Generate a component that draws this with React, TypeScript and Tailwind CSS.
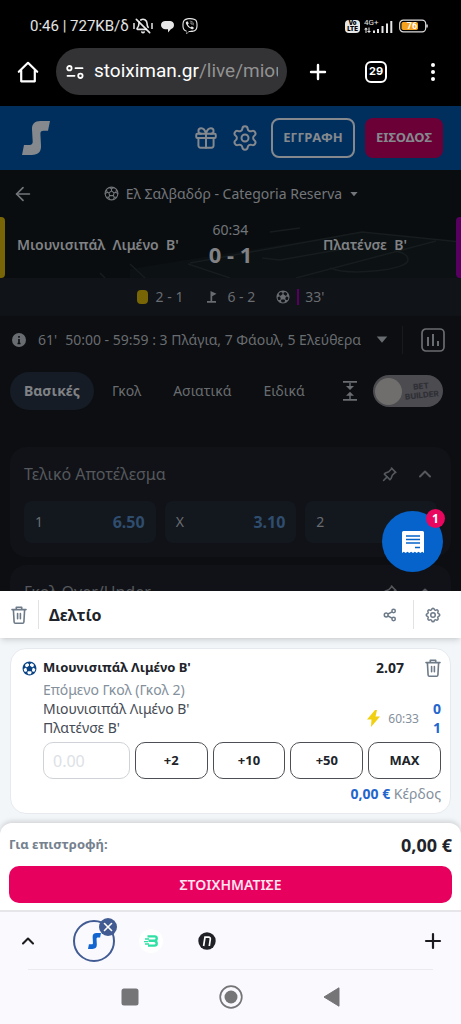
import React, { useState } from "react";
import { ArrowLeft, BellOff, ChevronUp, Gift, Plus, Settings, X } from "lucide-react";
import { FaViber } from "react-icons/fa";
import { TbPin, TbSettings } from "react-icons/tb";
import { IoFootball, IoFootballOutline } from "react-icons/io5";

const tabs = ["Βασικές", "Γκολ", "Ασιατικά", "Ειδικά"];
const odds = [
  { label: "1", price: "6.50" },
  { label: "X", price: "3.10" },
  { label: "2", price: "" },
];
const stakes = ["+2", "+10", "+50", "MAX"];

const Caret = ({ className }: { className?: string }) => (
  <svg viewBox="0 0 10 6" className={className} fill="currentColor">
    <path d="M0.5 0.5h9L5 5.8z" />
  </svg>
);

const LogoS = ({ className }: { className?: string }) => (
  <svg viewBox="0 0 28 34" className={className} fill="currentColor">
    <path d="M28 0H18.500C12.500 0 9.800 3 10 8.500L10.700 20.500C10.800 22.800 9.800 24 7.500 24H2L0 34H9.500C16.500 34 19.300 30.500 19 24.500L18.400 13C18.300 10.800 19.300 9.700 21.500 9.700H26Z" />
  </svg>
);

const Trash = ({ className }: { className?: string }) => (
  <svg viewBox="0 0 16 18" className={className} fill="none" stroke="currentColor" strokeWidth="1.600" strokeLinejoin="round" strokeLinecap="round">
    <path d="M1 3.600h14M5.300 3.400V1.200h5.400v2.200M2.400 3.800l.7 12.200c.1.800.5 1.200 1.200 1.200h7.400c.7 0 1.100-.4 1.200-1.200l.7-12.200M6.600 7.600v5.200M9.400 7.600v5.200" />
  </svg>
);

const Share = () => (
  <svg viewBox="0 0 14 14" className="h-3.5 w-3.5" fill="none" stroke="currentColor" strokeWidth="1.500">
    <circle cx="3.200" cy="7" r="1.900" />
    <circle cx="10.600" cy="3" r="1.700" />
    <circle cx="10.600" cy="11" r="1.700" />
    <path d="M5 6l4-2.200M5 8l4 2.200" />
  </svg>
);

const StatusBar = () => (
  <div className="flex h-12 items-center justify-between pr-8 pl-[30px] pt-1 text-white/90">
    <div className="flex items-center font-['Roboto',sans-serif] text-[15px]">
      <span>0:46 | 727KB/δ</span>
      <span className="ml-1 flex items-center">
        <svg viewBox="0 0 2 8" className="h-2 w-0.5" stroke="currentColor" strokeWidth="1.500">
          <path d="M1 1v6" />
        </svg>
        <BellOff className="h-4 w-4" strokeWidth={2.4} />
        <svg viewBox="0 0 2 8" className="h-2 w-0.5" stroke="currentColor" strokeWidth="1.500">
          <path d="M1 1v6" />
        </svg>
      </span>
      <svg viewBox="0 0 13 13" className="ml-2 h-[13px] w-[13px]" fill="currentColor">
        <path d="M4.500 1h4.200A4 4 0 0 1 13 5c0 2-1.200 3.700-3.200 4.200L7 12.500V9.300H4.500C2 9.300 0 7.500 0 5s2-4 4.500-4z" />
      </svg>
      <FaViber className="ml-2 h-4 w-4" />
    </div>
    <div className="flex items-center">
      <span className="flex h-[13px] w-[15px] flex-col items-center justify-center rounded-sm bg-white/90 font-['Inter',sans-serif] text-[6px] leading-[6px] font-black text-black">
        <span>Vo</span>
        <span>LTE</span>
      </span>
      <span className="ml-1 block font-['Roboto',sans-serif]">
        <svg viewBox="0 0 29 16" className="h-4 w-[29px]" fill="currentColor">
          <text x="0" y="6.500" fontSize="8">
            4G+
          </text>
          <path d="M2 9.500l2 2h-1.500V15h-1v-3.500H0zM5 15l-2-2h1.500V9.500h1V13H7zM9 12.500h2V15H9zM13 11h2v4h-2zM17.500 8h2v7h-2zM22 5.500h2V15h-2zM26.300 3h2v12h-2z" />
        </svg>
      </span>
      <svg viewBox="0 0 30 14" className="ml-1.5 h-3.5 w-[30px]">
        <rect x="0.700" y="1.200" width="26" height="11.600" rx="3.600" fill="none" stroke="#ddd" strokeWidth="1.200" />
        <rect x="2.500" y="3" width="16.500" height="8" rx="1.800" fill="#f5a11b" />
        <path d="M28 5.500v3" stroke="#ddd" strokeWidth="1.500" />
        <text x="13" y="10.200" fontSize="9" fontWeight="700" fill="#fff" textAnchor="middle" fontFamily="Roboto">
          76
        </text>
      </svg>
    </div>
  </div>
);

const BrowserBar = () => (
  <div className="flex h-[58px] items-start justify-between pr-5 pl-4">
    <div className="flex items-center">
      <button aria-label="Home" className="flex h-[47px] w-6 items-center justify-center">
        <svg viewBox="0 0 22 22" className="h-[22px] w-[22px]" fill="none" stroke="currentColor" strokeWidth="2.200" strokeLinejoin="round" strokeLinecap="round">
          <path d="M1.800 10.800L11 1.800l9.200 9M4.200 9.500v10.800h13.600V9.500" />
        </svg>
      </button>
      <div className="ml-4 flex h-[47px] w-[231px] items-center rounded-full bg-[#333335] pr-[9px] pl-2.5">
        <svg viewBox="0 0 18 14" className="h-3.5 w-[18px] shrink-0" fill="none" stroke="currentColor" strokeWidth="1.800" strokeLinecap="round">
          <circle cx="3.400" cy="3.200" r="2.200" />
          <path d="M9.500 3.200h7M1.500 10.800h7" />
          <circle cx="14.400" cy="10.800" r="2.200" />
        </svg>
        <div className="ml-2.5 overflow-hidden font-['Roboto',sans-serif] text-[19px] whitespace-nowrap">
          stoiximan.gr<span className="text-[#929292]">/live/miou</span>
        </div>
      </div>
    </div>
    <div className="flex h-[47px] items-center">
      <button aria-label="New tab">
        <Plus className="h-6 w-6" strokeWidth={2.4} />
      </button>
      <button className="ml-[35px] flex h-[22px] w-[22px] items-center justify-center rounded-md border-2 border-white font-['Inter',sans-serif] text-[11px] font-bold">29</button>
      <button aria-label="Menu" className="ml-[38px] flex w-4 flex-col items-center gap-[3px]">
        <i className="h-1 w-1 rounded-full bg-white" />
        <i className="h-1 w-1 rounded-full bg-white" />
        <i className="h-1 w-1 rounded-full bg-white" />
      </button>
    </div>
  </div>
);

const SiteHeader = () => (
  <header className="flex h-16 shrink-0 items-center bg-[#002f5e] pr-[18px] pl-[22px] text-[#85898e]">
    <a href="#" aria-label="Stoiximan" className="mr-auto">
      <LogoS className="h-[34px] w-7" />
    </a>
    <button aria-label="Δώρα">
      <Gift className="h-[26px] w-[26px]" strokeWidth={1.8} />
    </button>
    <button aria-label="Ρυθμίσεις" className="ml-3">
      <Settings className="h-7 w-7" strokeWidth={1.7} />
    </button>
    <button className="ml-3 h-10 w-[84px] rounded-lg border-2 border-[#85898e] text-[13px] font-bold">ΕΓΓΡΑΦΗ</button>
    <button className="ml-2.5 h-10 w-[78px] rounded-lg bg-[#6b0037] text-[13px] font-bold">ΕΙΣΟΔΟΣ</button>
  </header>
);

// faint pitch lines behind the scoreboard
const Pitch = () => (
  <svg viewBox="0 0 461 108" preserveAspectRatio="none" className="absolute inset-0 h-full w-full" fill="none" stroke="#171c1e" strokeWidth="1.500">
    <path d="M130 99L360 62 461 72V108H130z" fill="#0c1113" stroke="none" />
    <path d="M188 94l42 14M130 94l15 14M100 103l5 5M270 62l30-4M190 93L362 62l99 10M296 108l140-37M262 88l18 2 80-14" />
    <path d="M330 98c20 8 78 2 78-8 0-5-6-8-14-9" />
  </svg>
);

const Scoreboard = () => (
  <section className="shrink-0">
    <div className="relative bg-[#0a0d10]">
      <Pitch />
      <div className="relative flex h-[47px] items-center justify-center text-[#73767a]">
        <button aria-label="Πίσω" className="absolute left-3">
          <ArrowLeft className="h-[22px] w-[22px]" strokeWidth={1.8} />
        </button>
        <button className="flex items-center text-sm">
          <IoFootballOutline className="mr-1.5 h-[17px] w-[17px]" />
          Ελ Σαλβαδόρ - Categoria Reserva
          <Caret className="ml-2 h-1.5 w-2" />
        </button>
      </div>
      <div className="relative grid h-[61px] grid-cols-[5px_1fr_60px_1fr_5px] items-center text-[#808285]">
        <i className="h-full rounded-r-sm bg-[#786505]" />
        <div className="pb-1.5 pl-3 text-sm font-semibold whitespace-pre">{"Μιουνισιπάλ  Λιμένο  Β'"}</div>
        <div className="pb-1 text-center">
          <div className="text-sm leading-4 text-[#73767a]">60:34</div>
          <div className="text-[22px] leading-8 font-bold whitespace-nowrap">0 - 1</div>
        </div>
        <div className="pr-[49px] pb-1.5 text-right text-sm font-semibold whitespace-pre">{"Πλατένσε  Β'"}</div>
        <i className="h-full rounded-l-sm bg-[#570061]" />
      </div>
    </div>
    <div className="flex h-[37px] items-center justify-center bg-[#101318] text-sm text-[#696c70]">
      <i className="mr-2 h-3.5 w-[11px] rounded-sm bg-[#786505]" />
      2 - 1
      <svg viewBox="0 0 10 12" className="mr-2.5 ml-6 h-3 w-2.5" fill="currentColor">
        <path d="M3.500 0l6 2.800L5.200 5.200V10H9v1.800H0V10h3.500z" />
      </svg>
      6 - 2
      <IoFootball className="mr-1.5 ml-5 h-4 w-4" />
      <i className="mr-1.5 h-4 w-0.5 bg-[#570061]" />
      33'
    </div>
  </section>
);

const MarketHeader = ({ title }: { title: string }) => (
  <div className="flex h-[54px] items-center text-[#55585c]">
    <h2 className="flex-1 text-base">{title}</h2>
    <TbPin className="h-[19px] w-[19px]" />
    <ChevronUp className="mr-0.5 ml-4 h-5 w-5" strokeWidth={2.4} />
  </div>
);

const LivePage = () => {
  const [tab, setTab] = useState(0);
  const [builder, setBuilder] = useState(false);

  return (
    <main className="relative flex min-h-0 flex-1 flex-col overflow-hidden bg-[#0c0e11]">
      <SiteHeader />
      <Scoreboard />
      <div className="flex h-12 shrink-0 items-center border-t border-[#0f1216] pr-4 pl-3 text-sm text-[#696c70]">
        <svg viewBox="0 0 14 14" className="h-3.5 w-3.5 shrink-0">
          <circle cx="7" cy="7" r="7" fill="currentColor" />
          <path d="M7 3v1.800M7 6v4.500M5.500 10.500h3" stroke="#0c0e11" strokeWidth="1.600" />
        </svg>
        <span className="ml-3 whitespace-nowrap">61'</span>
        <span className="ml-2 flex-1 whitespace-nowrap">50:00 - 59:59 : 3 Πλάγια, 7 Φάουλ, 5 Ελεύθερα</span>
        <Caret className="h-[7px] w-3 shrink-0" />
        <i className="mx-3.5 h-7 w-px bg-[#171a1e]" />
        <button aria-label="Στατιστικά" className="ml-1 shrink-0">
          <svg viewBox="0 0 24 24" className="h-6 w-6" fill="none" stroke="currentColor" strokeWidth="1.700">
            <rect x="1" y="1" width="22" height="22" rx="4" />
            <path d="M7 9v9M12 6v12M17 13v5" strokeWidth="2" />
          </svg>
        </button>
      </div>
      <div className="flex h-14 shrink-0 items-center gap-1 pr-[18px] pl-2.5 text-sm text-[#696c70]">
        {tabs.map((item, index) => (
          <button key={item} onClick={() => setTab(index)} className={index === tab ? "h-[38px] rounded-full bg-[#151c25] px-3.5 font-bold text-[#808285]" : "h-[38px] px-3.5"}>
            {item}
          </button>
        ))}
        <button aria-label="Σύμπτυξη" className="mr-3 ml-auto">
          <svg viewBox="0 0 14 20" className="h-5 w-3.5" fill="currentColor">
            <path d="M0 0h14v1.800H0zM0 18h14v1.800H0zM6.300 2h1.400v3H11L7 9 3 5h3.300zM7 10.800l4 4H7.700V18H6.300v-3.200H3z" />
          </svg>
        </button>
        <label className="flex h-8 w-[70px] cursor-pointer items-center rounded-full bg-[#4b4b50] p-0.5">
          <input type="checkbox" aria-label="Bet Builder" checked={builder} onChange={() => setBuilder(!builder)} className="peer sr-only" />
          <i className="h-[27px] w-[27px] rounded-full bg-[#6f6e6c] peer-checked:order-last" />
          <span className="flex flex-1 -rotate-6 flex-col text-center font-['Inter',sans-serif] text-[8px] leading-[9px] font-extrabold text-[#303036]">
            <span>BET</span>
            <span>BUILDER</span>
          </span>
        </label>
      </div>
      <section className="mx-2.5 mt-7 h-[110px] shrink-0 rounded-2xl bg-[#101217] px-3.5">
        <MarketHeader title="Τελικό Αποτέλεσμα" />
        <div className="grid grid-cols-3 gap-[9px]">
          {odds.map((item) => (
            <button key={item.label} className="flex h-[42px] items-center justify-between rounded-lg bg-[#13181f] px-[11px]">
              <span className="text-sm text-[#696c70]">{item.label}</span>
              <span className="text-base font-bold text-[#2f4d6e]">{item.price}</span>
            </button>
          ))}
        </div>
      </section>
      <section className="mx-2.5 mt-2 h-[110px] shrink-0 rounded-2xl bg-[#101217] px-3.5">
        <MarketHeader title="Γκολ Over/Under" />
      </section>
      {/* floating betslip button */}
      <button aria-label="Δελτίο" className="absolute right-[18px] bottom-[19px] flex h-[61px] w-[61px] items-center justify-center rounded-full bg-[#0563cb] text-white">
        <svg viewBox="0 0 22 22" className="h-[22px] w-[22px]">
          <path d="M0 1.500Q0 0 1.500 0h19Q22 0 22 1.500V22l-1.800-1.200-1.800 1.200-1.900-1.200-1.800 1.200-1.800-1.200L11 22l-1.900-1.200L7.300 22l-1.800-1.200L3.600 22l-1.800-1.200L0 22z" fill="#fff" />
          <path d="M4 5h14M4 8.500h14M4 12h14M13 16.500h5" stroke="#0563cb" strokeWidth="1.300" />
        </svg>
        <span className="absolute -top-0.5 -right-0.5 flex h-[19px] w-[19px] items-center justify-center rounded-full bg-[#e9065f] text-xs font-bold">1</span>
      </button>
    </main>
  );
};

const BetSlip = () => {
  const [stake, setStake] = useState("");

  return (
    <section className="bg-[#f3f6f9] text-[#20242a]">
      <div className="flex h-[47px] items-center bg-white pr-[19px] pl-[11px] text-[#6d7a88] shadow-md">
        <button aria-label="Διαγραφή όλων">
          <Trash className="h-[18px] w-4" />
        </button>
        <i className="ml-[11px] h-[29px] w-px bg-[#e0e3e6]" />
        <h1 className="ml-2.5 flex-1 text-base font-bold text-[#20242a]">Δελτίο</h1>
        <button aria-label="Κοινοποίηση">
          <Share />
        </button>
        <i className="mr-2.5 ml-4 h-[29px] w-px bg-[#e0e3e6]" />
        <button aria-label="Ρυθμίσεις δελτίου">
          <TbSettings className="h-[18px] w-[18px]" />
        </button>
      </div>

      <div className="px-2.5 pt-2.5 pb-[9px]">
        <article className="rounded-2xl border border-[#e6eaee] bg-white pt-2 pr-[9px] pb-2 pl-2.5">
          <div className="flex h-[22px] items-center">
            <IoFootball className="h-[17px] w-[17px] text-[#0a4384]" />
            <h2 className="ml-[5px] flex-1 text-[13px] font-bold">Μιουνισιπάλ Λιμένο Β'</h2>
            <span className="text-sm font-bold">2.07</span>
            <button aria-label="Διαγραφή" className="ml-[21px] text-[#6d7a88]">
              <Trash className="h-[18px] w-4" />
            </button>
          </div>
          <div className="pl-[22px]">
            <div className="flex items-end">
              <div className="flex-1 text-sm leading-[19px] text-[#454b54]">
                <div className="pt-px text-[#84909c]">Επόμενο Γκολ (Γκολ 2)</div>
                <div>Μιουνισιπάλ Λιμένο Β'</div>
                <div>Πλατένσε Β'</div>
              </div>
              <svg viewBox="0 0 13 17" className="mb-2.5 h-[17px] w-[13px]" fill="#f0d010">
                <path d="M8 0L0 9.500h4.500L4 17l9-10.500H8.500L10 0z" />
              </svg>
              <span className="mb-2.5 ml-2 text-xs leading-4 text-[#84909c]">60:33</span>
              <div className="ml-3.5 text-sm leading-[19px] font-bold text-[#2466cc]">
                <div>0</div>
                <div>1</div>
              </div>
            </div>
            <div className="mt-[5px] grid grid-cols-[87fr_73fr_73fr_73fr_73fr] gap-[5px]">
              <input
                aria-label="Ποντάρισμα"
                placeholder="0.00"
                value={stake}
                onChange={(e) => setStake(e.target.value)}
                className="h-[37px] min-w-0 rounded-[10px] border border-[#cfd3d7] pl-[9px] text-base placeholder:text-[#dde1e6]"
              />
              {stakes.map((item) => (
                <button key={item} className="h-[37px] rounded-[10px] border border-[#4c4f53] text-[13px] font-bold">
                  {item}
                </button>
              ))}
            </div>
            <div className="mt-1 text-right text-sm leading-[22px] text-[#84909c]">
              <b className="text-[#2466cc]">0,00 €</b> Κέρδος
            </div>
          </div>
        </article>
      </div>

      <div className="rounded-t-xl bg-white px-[9px] pb-[7px] shadow-[0_-2px_5px_rgba(0,0,0,0.14)]">
        <div className="flex h-[43px] items-center justify-between">
          <span className="text-[13px] font-bold text-[#75818e]">Για επιστροφή:</span>
          <span className="text-lg font-bold">0,00 €</span>
        </div>
        <button className="h-[37px] w-full rounded-[10px] bg-[#e8005f] text-sm font-semibold text-[#ffe3ef]">ΣΤΟΙΧΗΜΑΤΙΣΕ</button>
      </div>
    </section>
  );
};

const TabStrip = () => (
  <div className="border-t-2 border-[#e6e6ea] bg-[#f9f9fe] text-[#1b1b1e]">
    <div className="flex h-[57px] items-center pr-4 pl-5">
      <button aria-label="Ανάπτυξη">
        <ChevronUp className="h-4 w-4 scale-125" strokeWidth={2.5} />
      </button>
      <button aria-label="Stoiximan" className="relative ml-[37px] flex h-[42px] w-[42px] items-center justify-center rounded-full border-2 border-[#425c93]">
        <LogoS className="h-4 w-[13px] text-[#1366cf]" />
        <span className="absolute -top-1 -right-1 flex h-[18px] w-[18px] items-center justify-center rounded-full bg-[#425c93] text-white">
          <X className="h-3.5 w-3.5" strokeWidth={2.8} />
        </span>
      </button>
      <button aria-label="Betano" className="ml-6 flex h-6 w-6 items-center justify-center rounded-full bg-white">
        <svg viewBox="0 0 14 12" className="h-3 w-3.5" fill="none" stroke="#2fe0a4" strokeWidth="2.400">
          <path d="M3.500 1.400h7.200q2 0 2 2t-2 2.400H4.500M10.700 6q2 .4 2 2.400t-2.400 2.200H4" />
          <path d="M1 4h4M0 6.600h4M1 9h4" strokeWidth="1.300" />
        </svg>
      </button>
      <button aria-label="Novibet" className="ml-8 flex h-6 w-6 items-center justify-center">
        <svg viewBox="0 0 18 18" className="h-[18px] w-[18px]">
          <circle cx="9" cy="9" r="8.700" fill="#1f2126" />
          <path d="M5.600 14L7 5.200h3.600q2 0 1.700 2L11.300 14" fill="none" stroke="#fff" strokeWidth="1.700" />
        </svg>
      </button>
      <button aria-label="Νέα καρτέλα" className="ml-auto">
        <Plus className="h-6 w-6" strokeWidth={2.2} />
      </button>
    </div>
    <div className="mx-7 h-px bg-[#ebebef]" />
    <nav className="flex h-[54px] items-center justify-center gap-[79px] text-[#757578]">
      <button aria-label="Πρόσφατα">
        <svg viewBox="0 0 20 20" className="h-5 w-5" fill="currentColor">
          <rect x="1.500" y="1.500" width="17" height="17" rx="2.500" />
        </svg>
      </button>
      <button aria-label="Αρχική">
        <svg viewBox="0 0 24 24" className="h-6 w-6">
          <circle cx="12" cy="12" r="10.800" fill="none" stroke="currentColor" strokeWidth="1.700" />
          <circle cx="12" cy="12" r="6.500" fill="currentColor" />
        </svg>
      </button>
      <button aria-label="Επιστροφή">
        <svg viewBox="0 0 20 20" className="h-5 w-5" fill="currentColor">
          <path d="M17 .8v18.400L2 10z" stroke="currentColor" strokeLinejoin="round" />
        </svg>
      </button>
    </nav>
  </div>
);

export default function App() {
  return (
    <div className="flex h-screen flex-col bg-black font-['Noto_Sans',sans-serif]">
      <div className="text-white">
        <StatusBar />
        <BrowserBar />
      </div>
      <LivePage />
      <BetSlip />
      <TabStrip />
    </div>
  );
}
